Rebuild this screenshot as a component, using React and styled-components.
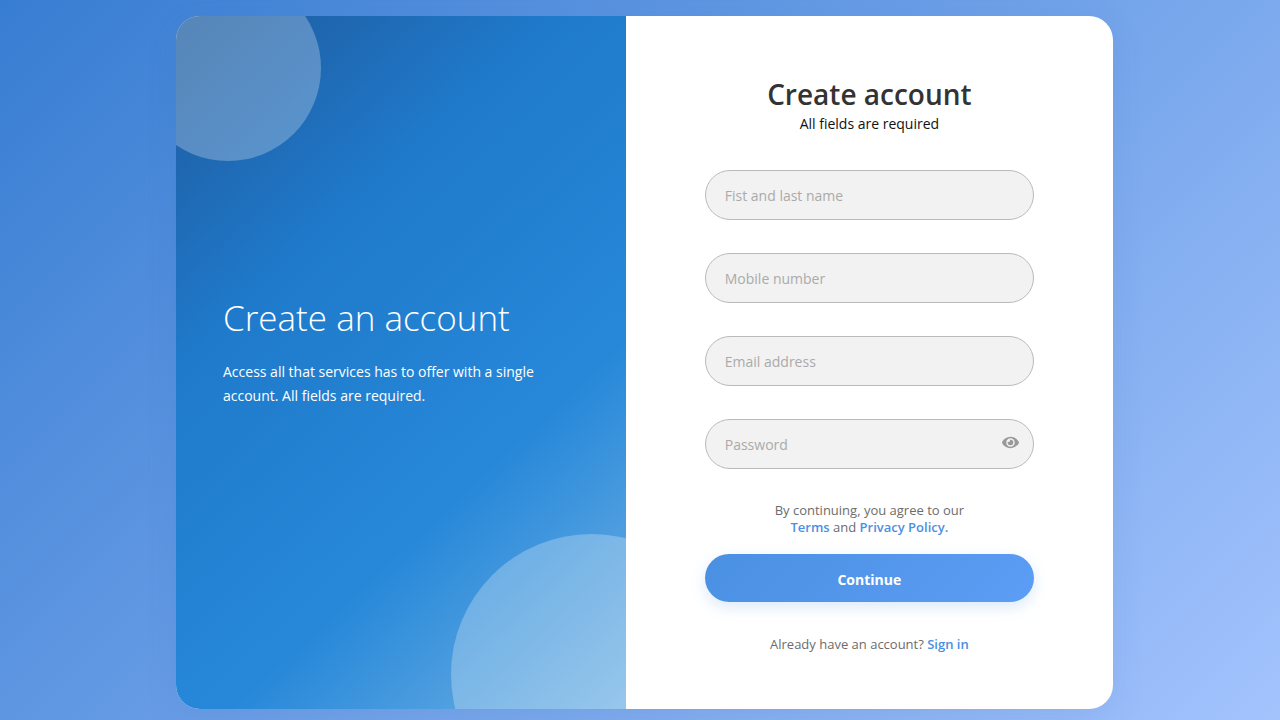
import React, { useState } from "react";
import styled, { createGlobalStyle } from "styled-components";
import { FaEye } from "react-icons/fa";

const GlobalStyle = createGlobalStyle`
  *, *::before, *::after { box-sizing: border-box; }
  body {
    margin: 0;
    font-family: "Segoe UI", "Open Sans", "Noto Sans", sans-serif;
  }
  h1, h2, p { margin: 0; }
`;

const Page = styled.div`
  display: flex;
  justify-content: center;
  min-height: 100vh;
  padding: 16px 16px 11px 25px;
  background: linear-gradient(135deg, #377dd2 0%, #4d8bdb 20%, #a3c3fd 100%);
`;

const Card = styled.main`
  display: grid;
  grid-template-columns: 48fr 52fr;
  width: 100%;
  max-width: 937px;
  overflow: hidden;
  border-radius: 24px;
  background: #fff;
  box-shadow: 0 8px 32px rgba(60, 100, 170, 0.12);
`;

const Intro = styled.section`
  position: relative;
  display: flex;
  flex-direction: column;
  justify-content: center;
  gap: 14px;
  padding: 0 47px 28px;
  overflow: hidden;
  color: #fff;
  background: linear-gradient(137deg, #1d5c9f 0%, #1f68b2 15%, #1f7acb 32%, #2788d9 67%, #73b3e5 100%);
`;

const Circle = styled.span`
  position: absolute;
  width: ${(p) => p.$size}px;
  height: ${(p) => p.$size}px;
  border-radius: 50%;
  background: rgba(255, 255, 255, 0.26);
`;

const TopCircle = styled(Circle)`
  top: -41px;
  left: -41px;
`;

const BottomCircle = styled(Circle)`
  right: -106px;
  bottom: -106px;
`;

const IntroTitle = styled.h2`
  font-size: 35px;
  font-weight: 300;
  line-height: 56px;
`;

const IntroText = styled.p`
  font-size: 14px;
  line-height: 24px;
`;

const FormPanel = styled.section`
  display: flex;
  flex-direction: column;
  align-items: center;
  padding: 60px 79px 56px;
`;

const Title = styled.h1`
  color: #333;
  font-size: 28px;
  font-weight: 600;
  line-height: 36px;
`;

const Subtitle = styled.p`
  color: #111;
  font-size: 14px;
  line-height: 24px;
`;

const Form = styled.form`
  display: flex;
  flex-direction: column;
  gap: 33px;
  width: 100%;
  padding-top: 34px;
`;

const Field = styled.div`
  display: flex;
  align-items: center;
  height: 50px;
  padding-right: 14px;
  border: 1px solid #bababa;
  border-radius: 25px;
  background: #f2f2f2;
`;

const Input = styled.input`
  flex: 1;
  min-width: 0;
  height: 100%;
  padding: 0 19px;
  border: 0;
  outline: 0;
  background: transparent;
  color: #333;
  font-family: inherit;
  font-size: 14px;
  &::placeholder { color: #aaa; opacity: 1; }
`;

const EyeButton = styled.button`
  display: flex;
  padding: 0 0 4px;
  border: 0;
  background: none;
  color: #999;
  font-size: 17px;
  cursor: pointer;
`;

const Actions = styled.div`
  display: flex;
  flex-direction: column;
  gap: 18px;
`;

const Note = styled.p`
  color: #6c6c6c;
  font-size: 13px;
  line-height: 17px;
  text-align: center;
`;

const Link = styled.a`
  color: #4a90e2;
  font-weight: 600;
  text-decoration: none;
`;

const Submit = styled.button`
  width: 100%;
  height: 48px;
  padding: 2px 0 0;
  border: 0;
  border-radius: 24px;
  background: linear-gradient(135deg, #4a90e2, #5c9df5);
  box-shadow: 0 5px 15px rgba(74, 144, 226, 0.2);
  color: #fff;
  font-family: inherit;
  font-size: 14px;
  font-weight: 700;
  cursor: pointer;
`;

const SignIn = styled(Note)`
  padding-top: 34px;
`;

const fields = [
  { id: "name", type: "text", label: "Fist and last name" },
  { id: "mobile", type: "tel", label: "Mobile number" },
  { id: "email", type: "email", label: "Email address" },
];

export default function App() {
  const [visible, setVisible] = useState(false);

  return (
    <>
      <GlobalStyle />
      <Page>
        <Card>
          <Intro>
            <TopCircle $size={186} />
            <BottomCircle $size={281} />
            <IntroTitle>Create an account</IntroTitle>
            <IntroText>
              Access all that services has to offer with a single account. All fields are required.
            </IntroText>
          </Intro>
          <FormPanel>
            <Title>Create account</Title>
            <Subtitle>All fields are required</Subtitle>
            <Form onSubmit={(e) => e.preventDefault()}>
              {fields.map((f) => (
                <Field key={f.id}>
                  <Input id={f.id} type={f.type} placeholder={f.label} aria-label={f.label} />
                </Field>
              ))}
              <Field>
                <Input
                  id="password"
                  type={visible ? "text" : "password"}
                  placeholder="Password"
                  aria-label="Password"
                />
                <EyeButton type="button" aria-label="Show password" onClick={() => setVisible(!visible)}>
                  <FaEye />
                </EyeButton>
              </Field>
              <Actions>
                <Note>
                  By continuing, you agree to our
                  <br />
                  <Link href="#terms">Terms</Link> and <Link href="#privacy">Privacy Policy.</Link>
                </Note>
                <Submit type="submit">Continue</Submit>
              </Actions>
            </Form>
            <SignIn>
              Already have an account? <Link href="#signin">Sign in</Link>
            </SignIn>
          </FormPanel>
        </Card>
      </Page>
    </>
  );
}
